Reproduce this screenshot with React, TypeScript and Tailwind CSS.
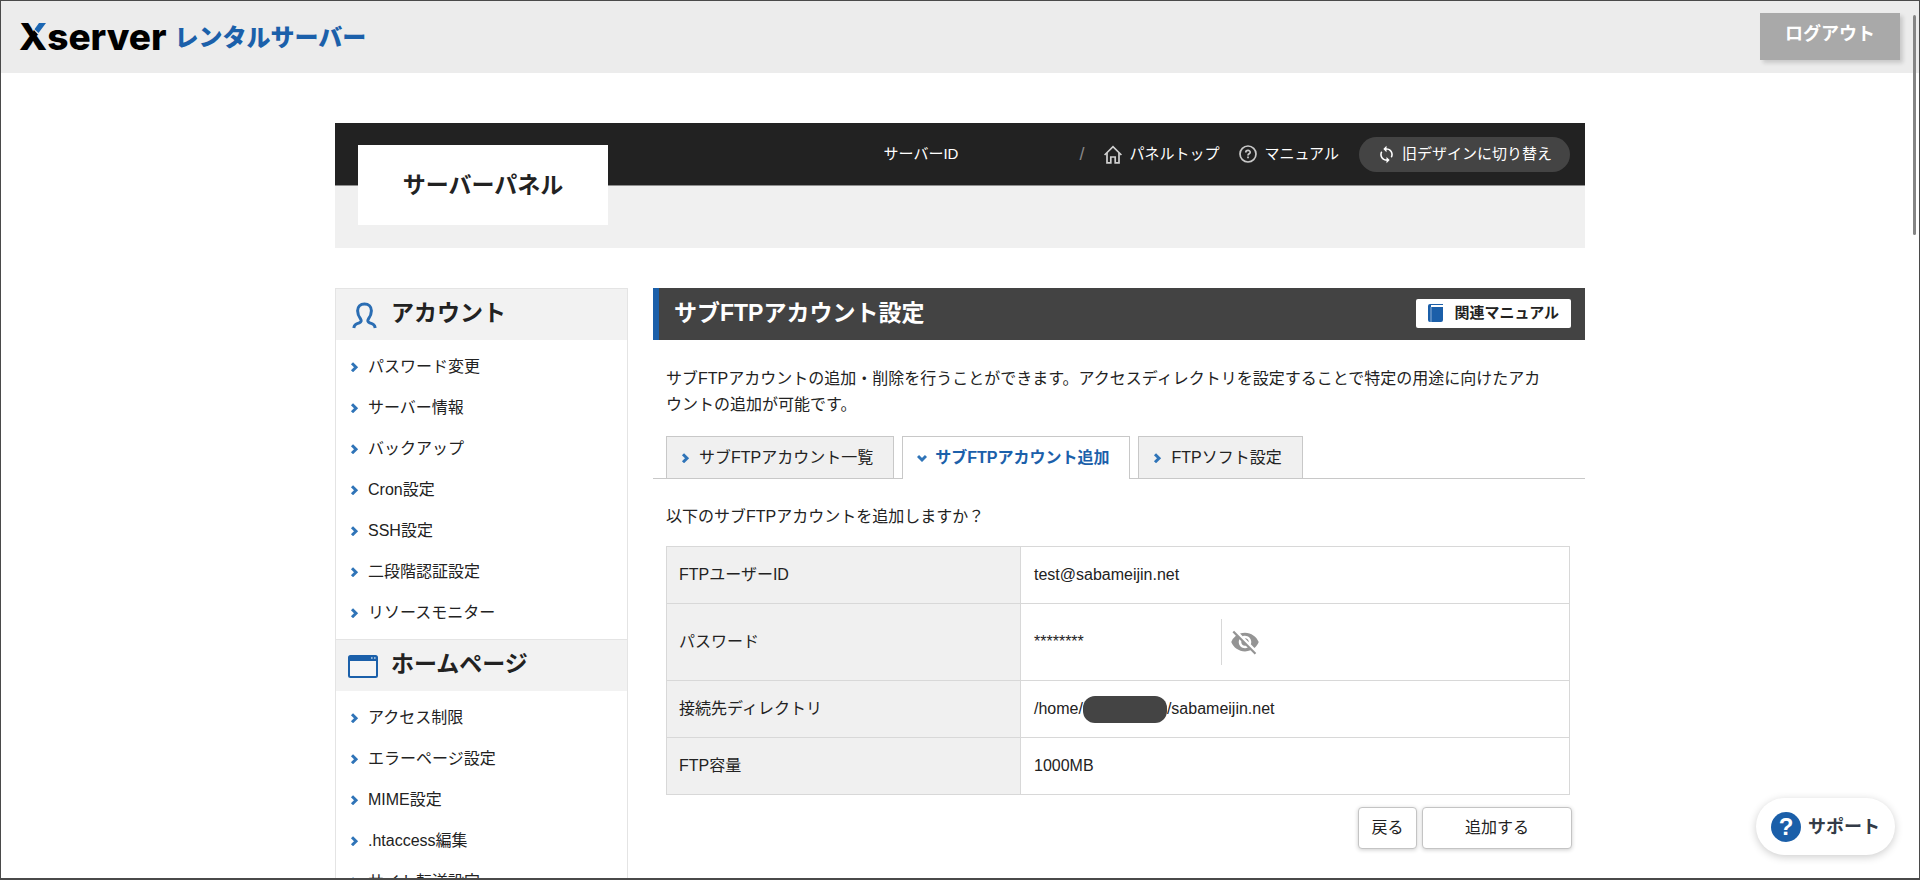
import React from 'react';
import { MdSync, MdVisibilityOff } from 'react-icons/md';

const menuGroups = [
  {
    title: 'アカウント',
    icon: 'user',
    items: ['パスワード変更', 'サーバー情報', 'バックアップ', 'Cron設定', 'SSH設定', '二段階認証設定', 'リソースモニター'],
  },
  {
    title: 'ホームページ',
    icon: 'window',
    items: ['アクセス制限', 'エラーページ設定', 'MIME設定', '.htaccess編集', 'サイト転送設定'],
  },
];

const Chevron: React.FC<{ down?: boolean }> = ({ down }) => (
  <svg width="10" height="10" viewBox="0 0 10 10" fill="none" stroke="#2f74b8" strokeWidth="3" className="shrink-0">
    {down ? <path d="M1 3 L5 7 L9 3" /> : <path d="M2 1.2 L6 5.2 L2 9.2" />}
  </svg>
);

const UserIcon: React.FC = () => (
  <svg width="25" height="27" viewBox="0 0 25 27" fill="none" stroke="#2a6db3" strokeWidth="3" className="shrink-0">
    <path d="M1.8 26 C2.2 22.6 4 22 7.4 20.8 C9.4 20 9.6 18.6 8.6 17 C6.4 14.2 5.6 12 5.6 8.8 C5.6 4.4 8.4 2 12.5 2 C16.6 2 19.4 4.4 19.4 8.8 C19.4 12 18.6 14.2 16.4 17 C15.4 18.6 15.6 20 17.6 20.8 C21 22 22.8 22.6 23.2 26" />
  </svg>
);

const WindowIcon: React.FC = () => (
  <svg width="30" height="23" viewBox="0 0 30 23" className="shrink-0">
    <rect x="1" y="1" width="28" height="21" rx="1.5" fill="#f5f5f5" stroke="#1b60aa" strokeWidth="2" />
    <path d="M1 1 H29 V6 H1 Z" fill="#1b60aa" />
    <path d="M23 3 h1.6 M26 3 h1.6" stroke="#b9cfe6" strokeWidth="1.6" />
  </svg>
);

const HomeIcon: React.FC = () => (
  <svg width="18" height="19" viewBox="0 0 18 19" fill="none" stroke="#d0d0d0" strokeWidth="1.7" className="shrink-0">
    <path d="M0.6 10 L9 1.6 L17.4 10" />
    <path d="M3 8 V17.8 H6.8 V12 H11.2 V17.8 H15 V8" />
  </svg>
);

const HelpIcon: React.FC = () => (
  <svg width="18" height="18" viewBox="0 0 18 18" fill="none" stroke="#c9c9c9" strokeWidth="1.7" className="shrink-0">
    <circle cx="9" cy="9" r="8" />
    <path d="M6.8 7.4 C6.8 4.8 11.2 4.8 11.2 7.2 C11.2 8.8 9 8.8 9 10.4 M9 11.6 V13.2" />
  </svg>
);

const BookIcon: React.FC = () => (
  <svg width="15" height="18" viewBox="0 0 15 18" className="shrink-0">
    <path d="M2 0 H15 V1 H3 V3 H15 V16 Q15 18 13 18 H2 Q0 18 0 16 V2 Q0 0 2 0 Z" fill="#1b5fa9" />
    <path d="M3 3 V18" stroke="#8fb2d8" strokeWidth="1" />
  </svg>
);

const Sidebar: React.FC = () => (
  <nav className="w-[293px] shrink-0 border border-[#e4e4e4]">
    {menuGroups.map((group, i) => (
      <section key={group.title} className={i > 0 ? 'border-t border-[#e4e4e4]' : ''}>
        <h2 className="flex h-[51px] items-center bg-[#f2f2f2] pb-[2px] pl-3 text-[23px] font-bold">
          <span className="flex w-[43px] pt-[3px]">
            {group.icon === 'user' ? <span className="pl-1"><UserIcon /></span> : <WindowIcon />}
          </span>
          {group.title}
        </h2>
        <ul className="py-[6px]">
          {group.items.map((item) => (
            <li key={item}>
              <a href="#" className="flex h-[41px] items-center gap-2 pl-[14px] text-base">
                <Chevron />
                {item}
              </a>
            </li>
          ))}
        </ul>
      </section>
    ))}
  </nav>
);

const Tabs: React.FC = () => (
  <div className="mt-[18px] flex gap-2 border-b border-[#c8c8c8] pl-[13px] text-base">
    <a href="#" className="flex h-[42px] items-center gap-2 border border-b-0 border-[#c8c8c8] bg-[#f0f0f0] pr-5 pl-[14px]">
      <Chevron />サブFTPアカウント一覧
    </a>
    <a href="#" className="-mb-px flex h-[43px] items-center gap-2 border border-b-0 border-[#c8c8c8] bg-white pr-5 pl-[14px] font-bold text-[#1b60aa]">
      <Chevron down />サブFTPアカウント追加
    </a>
    <a href="#" className="flex h-[42px] items-center gap-2 border border-b-0 border-[#c8c8c8] bg-[#f0f0f0] pr-5 pl-[14px]">
      <Chevron />FTPソフト設定
    </a>
  </div>
);

const ConfirmTable: React.FC = () => (
  <table className="w-full border-collapse text-left text-base [&_td]:border [&_td]:border-[#d8d8d8] [&_td]:px-[13px] [&_th]:w-[354px] [&_th]:border [&_th]:border-[#d8d8d8] [&_th]:bg-[#f0f0f0] [&_th]:px-3 [&_th]:font-normal">
    <tbody>
      <tr className="h-[57px]">
        <th scope="row">FTPユーザーID</th>
        <td>test@sabameijin.net</td>
      </tr>
      <tr className="h-[77px]">
        <th scope="row">パスワード</th>
        <td>
          <div className="flex items-center">
            <span className="w-[187px]">********</span>
            <button type="button" aria-label="パスワードを表示" className="flex h-[46px] items-center border-l border-[#d8d8d8] pl-2 text-[#949494]">
              <MdVisibilityOff size={30} />
            </button>
          </div>
        </td>
      </tr>
      <tr className="h-[57px]">
        <th scope="row">接続先ディレクトリ</th>
        <td>
          <div className="flex items-center">
            /home/
            <span className="h-[27px] w-[84px] rounded-xl bg-[#444]"></span>
            /sabameijin.net
          </div>
        </td>
      </tr>
      <tr className="h-[57px]">
        <th scope="row">FTP容量</th>
        <td>1000MB</td>
      </tr>
    </tbody>
  </table>
);

const App: React.FC = () => {
  return (
    <div className="relative h-screen overflow-hidden border border-b-2 border-[#4a4a4a] bg-white font-['Liberation_Sans','Noto_Sans_CJK_JP',sans-serif] text-[#222]">
      <header className="flex h-[72px] items-center justify-between bg-[#ececec] pr-[19px] pb-[2px] pl-[18px]">
        <a href="#" className="flex items-center gap-2">
          <span className="relative font-['Inter',sans-serif] text-[37px] leading-none font-extrabold text-black">
            Xserver
            <svg width="14" height="12" viewBox="0 0 14 12" className="absolute top-1 left-[14px]">
              <path d="M0 0 H14 V12 H4.5 L0 7 Z" fill="#ececec" />
              <path d="M6 1 H13 L5.5 11 L1.5 7.2 Z" fill="#1b66b3" />
            </svg>
          </span>
          <span className="pt-1 text-2xl leading-9 font-black text-[#1b60aa]">レンタルサーバー</span>
        </a>
        <button type="button" className="h-[47px] w-[140px] bg-[#a9a9a9] pb-1 text-lg font-bold text-white shadow-[3px_3px_4px_rgba(0,0,0,0.15)]">
          ログアウト
        </button>
      </header>

      <div className="mx-auto mt-[50px] w-full max-w-[1250px]">
        <div className="relative bg-[#f0f0f0] pb-[62px]">
          <div className="flex h-[63px] items-center justify-end border-b border-[#8f8f8f] bg-[#222] pr-[15px] text-[15px] text-white">
            <span className="mr-[121px]">サーバーID</span>
            <span className="mr-5 text-lg text-[#888]">/</span>
            <a href="#" className="mr-5 flex items-center gap-[7px]"><HomeIcon />パネルトップ</a>
            <a href="#" className="mr-5 flex items-center gap-[7px]"><HelpIcon />マニュアル</a>
            <a href="#" className="flex h-[35px] items-center gap-[6px] rounded-full bg-[#444] px-[18px]">
              <MdSync size={19} />旧デザインに切り替え
            </a>
          </div>
          <h1 className="absolute top-[22px] left-[23px] flex h-20 w-[250px] items-center justify-center bg-white text-[23px] font-bold">
            サーバーパネル
          </h1>
        </div>

        <div className="mt-10 flex items-start gap-[25px]">
          <Sidebar />
          <main className="min-w-0 flex-1">
            <div className="flex h-[52px] items-center justify-between border-l-[6px] border-[#1b5fa9] bg-[#434343] pr-[14px] pb-[2px] pl-[15px]">
              <h2 className="text-[23px] font-bold text-white">サブFTPアカウント設定</h2>
              <a href="#" className="flex h-[29px] items-center gap-[11px] rounded-xs bg-white px-3 text-[15px] font-bold">
                <BookIcon />関連マニュアル
              </a>
            </div>
            <p className="mt-[26px] pr-8 pl-[13px] text-base leading-[26px]">
              サブFTPアカウントの追加・削除を行うことができます。アクセスディレクトリを設定することで特定の用途に向けたアカウントの追加が可能です。
            </p>
            <Tabs />
            <div className="pt-[25px] pr-[15px] pl-[13px]">
              <p className="mb-4 text-base leading-[26px]">以下のサブFTPアカウントを追加しますか？</p>
              <ConfirmTable />
            </div>
            <div className="mt-3 flex justify-end gap-[5px] pr-[13px] text-base">
              <button type="button" className="h-[42px] w-[59px] rounded-sm border border-[#c4c4c4] bg-white shadow-[0_1px_4px_rgba(0,0,0,0.2)]">戻る</button>
              <button type="button" className="h-[42px] w-[150px] rounded-sm border border-[#c4c4c4] bg-white shadow-[0_1px_4px_rgba(0,0,0,0.2)]">追加する</button>
            </div>
          </main>
        </div>
      </div>

      <button type="button" className="absolute right-6 bottom-[23px] flex h-[57px] items-center gap-[7px] rounded-full bg-white px-[15px] text-lg font-bold text-[#333b47] shadow-[0_2px_8px_rgba(0,0,0,0.2)]">
        <span className="flex size-[30px] items-center justify-center rounded-full bg-[#1b5fa9] text-2xl leading-none text-white">?</span>
        サポート
      </button>
      <div className="absolute top-[14px] right-[3px] h-[220px] w-[3px] rounded-full bg-[#858585]"></div>
    </div>
  );
};

export default App;
